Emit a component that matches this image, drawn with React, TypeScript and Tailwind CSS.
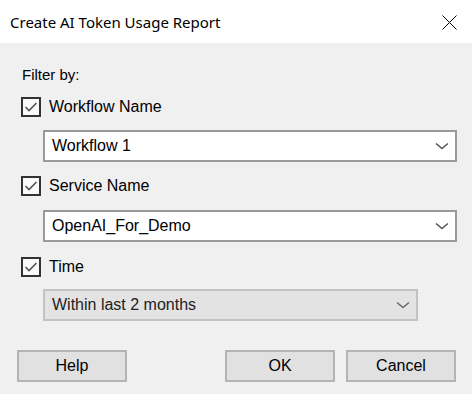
const Chevron = ({ color }: { color: string }) => (
  <svg width="14" height="8" viewBox="0 0 14 8" className="shrink-0">
    <path d="M1 1.5 L7 6.5 L13 1.5" fill="none" stroke={color} strokeWidth="1.6" />
  </svg>
);

const CheckRow = ({ label, top }: { label: string; top: string }) => (
  <div className={`flex items-center h-[20px] ml-[21px] ${top}`}>
    <div className="w-[20px] h-[20px] border-2 border-[#333333] bg-[#fafafa] flex items-center justify-center">
      <svg width="16" height="16" viewBox="0 0 16 16">
        <path d="M2.5 8 L6 11.5 L13.5 4" fill="none" stroke="#555555" strokeWidth="1.6" />
      </svg>
    </div>
    <span className="ml-[8px] text-[16px] text-black leading-none">{label}</span>
  </div>
);

const Combo = ({ value, top, width, disabled }: { value: string; top: string; width: string; disabled?: boolean }) => (
  <div
    className={`flex items-center justify-between ml-[43px] h-[32px] border-2 pl-[7px] pr-[6px] ${top} ${width} ${
      disabled ? 'bg-[#e3e3e3] border-[#c2c2c2] text-[#222222]' : 'bg-white border-[#9a9a9a] text-black'
    }`}
  >
    <span className="text-[16px] leading-none">{value}</span>
    <Chevron color={disabled ? '#6a6a6a' : '#555555'} />
  </div>
);

const Button = ({ label, className }: { label: string; className?: string }) => (
  <button
    type="button"
    className={`h-[32px] w-[110px] bg-[#e1e1e1] border-2 border-[#b4b4b4] text-[16px] text-black leading-none ${className ?? ''}`}
  >
    {label}
  </button>
);

export default function App() {
  return (
    <div className="w-[472px] h-[394px] bg-[#f0f0f0] flex flex-col font-['Liberation_Sans',Arial,sans-serif]">
      <div className="h-[43px] bg-white flex items-center justify-between pl-[10px] pr-[15px] pt-[2px] shrink-0">
        <span className="text-[15px] text-black font-['Noto_Sans','Open_Sans',sans-serif] leading-none">
          Create AI Token Usage Report
        </span>
        <svg width="15" height="15" viewBox="0 0 15 15">
          <path d="M0.5 0.5 L14.5 14.5 M14.5 0.5 L0.5 14.5" stroke="#000" strokeWidth="1" />
        </svg>
      </div>

      <div className="mt-[22px] h-[18px] ml-[22px] flex items-center text-[15px] text-black leading-none">Filter by:</div>

      <CheckRow label="Workflow Name" top="mt-[14px]" />
      <Combo value="Workflow 1" top="mt-[13px]" width="w-[414px]" />

      <CheckRow label="Service Name" top="mt-[14px]" />
      <Combo value="OpenAI_For_Demo" top="mt-[14px]" width="w-[414px]" />

      <CheckRow label="Time" top="mt-[15px]" />
      <Combo value="Within last 2 months" top="mt-[12px]" width="w-[375px]" disabled />

      <div className="flex items-center mt-[29px] ml-[17px]">
        <Button label="Help" />
        <Button label="OK" className="ml-[98px]" />
        <Button label="Cancel" className="ml-[11px]" />
      </div>
    </div>
  );
}
